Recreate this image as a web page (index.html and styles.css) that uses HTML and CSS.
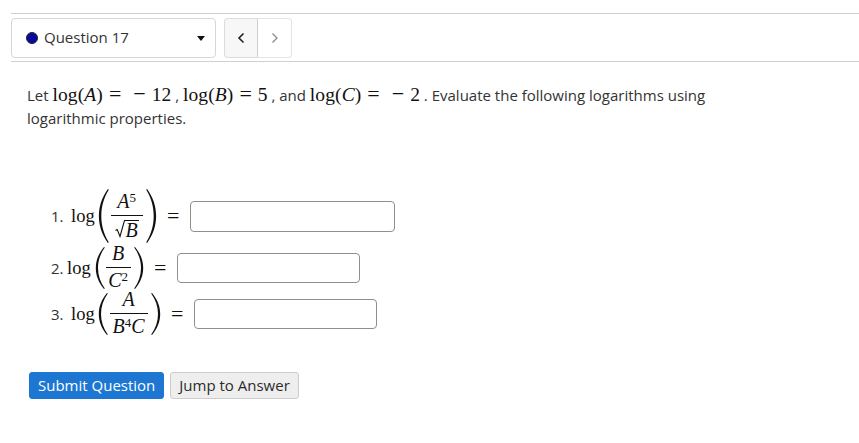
FILE: index.html
```html
<!DOCTYPE html>
<html lang="en">
<head>
<meta charset="utf-8">
<title>Question 17</title>
<link rel="stylesheet" href="styles.css">
</head>
<body>
<svg class="defs" width="0" height="0" aria-hidden="true">
  <symbol id="paren" viewBox="0 0 10 50" preserveAspectRatio="none">
    <path d="M9 0C3.500 8 .8 16 .8 25S3.500 42 9 50L9.800 49.300C5.400 42 3 34 3 25S5.400 8 9.800 .7Z" fill="#111"/>
  </symbol>
</svg>
<main class="page">
  <nav class="nav">
    <div class="select">
      <span class="dot"></span>
      <span class="select-label">Question 17</span>
      <span class="caret"></span>
    </div>
    <div class="pager">
      <button class="page-btn active" type="button"><svg width="8" height="12" viewBox="0 0 8 12"><path d="M6.500 1.500 2 6l4.500 4.500" fill="none" stroke="#222" stroke-width="1.600"/></svg></button>
      <button class="page-btn" type="button"><svg width="8" height="12" viewBox="0 0 8 12"><path d="M1.500 1.500 6 6l-4.500 4.500" fill="none" stroke="#8a8a8a" stroke-width="1.300"/></svg></button>
    </div>
  </nav>
  <section class="question">
    <p class="prompt">Let <span class="m"><span class="fn">log(<i>A</i>)</span><span class="op">=</span><span class="neg">−</span><span class="dg">12</span></span> , <span class="m"><span class="fn">log(<i>B</i>)</span><span class="op">=</span><span class="dg">5</span></span> , and <span class="m"><span class="fn">log(<i>C</i>)</span><span class="op">=</span><span class="neg">−</span><span class="dg">2</span></span> . Evaluate the following logarithms using<br>logarithmic properties.</p>
    <div class="rows">
      <div class="row row-1">
        <span class="num">1.</span><span class="m log">log</span>
        <svg class="paren paren-tall"><use href="#paren"/></svg>
        <span class="frac frac-1"><span class="top"><i>A</i><sup>5</sup></span><span class="bot bot-root"><svg class="radical" width="10" height="18" viewBox="0 0 10 18"><path d="M.5 10.500 2.200 9.500 5 16.500 9.500 .5H10" fill="none" stroke="#111" stroke-width="1.100"/></svg><i class="over">B</i></span></span>
        <svg class="paren paren-tall flip"><use href="#paren"/></svg>
        <span class="m eq">=</span>
        <input class="answer answer-1" type="text" aria-label="Answer 1">
      </div>
      <div class="row row-2">
        <span class="num">2.</span><span class="m log">log</span>
        <svg class="paren"><use href="#paren"/></svg>
        <span class="frac frac-2"><span class="top"><i>B</i></span><span class="bot"><i>C</i><sup>2</sup></span></span>
        <svg class="paren flip"><use href="#paren"/></svg>
        <span class="m eq">=</span>
        <input class="answer answer-2" type="text" aria-label="Answer 2">
      </div>
      <div class="row row-3">
        <span class="num">3.</span><span class="m log">log</span>
        <svg class="paren"><use href="#paren"/></svg>
        <span class="frac frac-3"><span class="top"><i>A</i></span><span class="bot"><i>B</i><sup>4</sup><i>C</i></span></span>
        <svg class="paren flip"><use href="#paren"/></svg>
        <span class="m eq">=</span>
        <input class="answer answer-2" type="text" aria-label="Answer 3">
      </div>
    </div>
    <div class="actions">
      <button class="btn primary" type="button">Submit Question</button>
      <button class="btn" type="button">Jump to Answer</button>
    </div>
  </section>
</main>
</body>
</html>
```
FILE: styles.css
```css
* { box-sizing: border-box; }
html, body { margin: 0; padding: 0; }
body {
  background: #fff;
  color: #2b2b2b;
  font-family: "Open Sans", sans-serif;
  font-size: 15px;
}
.defs { display: block; height: 0; }
.page { padding: 13px 0 0 11px; }

.nav {
  display: flex;
  gap: 8px;
  height: 49px;
  padding: 4px 0 3px;
  border-top: 1px solid #d0d0d0;
  border-bottom: 1px solid #d0d0d0;
}
.select {
  display: flex;
  align-items: center;
  width: 205px;
  padding: 0 10px 0 14px;
  border: 1px solid #d6d6d6;
  border-radius: 4px;
}
.dot {
  width: 12px;
  height: 12px;
  margin-right: 6px;
  border-radius: 50%;
  background: #0a0a9a;
  border: 1px solid #223;
}
.select-label { flex: 1; padding-bottom: 2px; font-size: 15px; color: #333; }
.caret {
  width: 0;
  height: 0;
  border-left: 4px solid transparent;
  border-right: 4px solid transparent;
  border-top: 5px solid #111;
}
.pager { display: flex; }
.page-btn {
  display: flex;
  align-items: center;
  justify-content: center;
  width: 34px;
  padding: 0;
  background: #fff;
  border: 1px solid #e4e4e4;
  border-left: 0;
  border-radius: 0 4px 4px 0;
}
.page-btn.active {
  background: #f7f7f7;
  border: 1px solid #dcdcdc;
  border-right-color: #cfcfcf;
  border-radius: 4px 0 0 4px;
}

.question { padding: 21px 0 0 16px; }
.prompt {
  margin: 0;
  font-size: 15px;
  line-height: 23px;
  color: #333;
}
.m {
  font-family: "Liberation Serif", serif;
  font-size: 19.500px;
  line-height: 1;
  color: #111;
}
.fn { letter-spacing: .1px; }
.op { margin: 0 6px; font-size: 22px; line-height: 1; }
.neg { margin: 0 6px; font-size: 22px; line-height: 1; }
.rows { margin-top: 57px; padding-left: 24px; }
.row { display: flex; align-items: center; }
.row-1 { height: 58px; }
.row-2, .row-3 { height: 46px; }
.num { width: 20px; font-size: 15px; color: #333; }
.row-2 .num { width: 16px; }
.log { margin-right: 3px; font-size: 18.500px; }
.row-2 .log { margin-right: 4px; }
.paren { display: block; width: 10px; height: 42px; flex: none; }
.paren-tall { width: 11px; height: 54px; }
.flip { transform: scaleX(-1); }
.frac {
  display: flex;
  flex-direction: column;
  align-items: center;
  font-family: "Liberation Serif", serif;
  font-size: 20px;
  color: #111;
  line-height: 20px;
}
.frac-1 { width: 32px; margin: 0 3px 0 2px; }
.frac-2 { width: 25px; margin: 0 3px 0 1px; }
.frac-3 { width: 38px; margin: 0 3px 0 2px; }
.top, .bot { display: block; height: 26px; white-space: nowrap; text-align: center; }
.top { width: 100%; padding-top: 1px; border-bottom: 1px solid #111; }
.bot { padding-top: 2px; }
.bot-root { display: flex; align-items: flex-start; padding-top: 4px; }
.radical { display: block; flex: none; }
sup { font-size: 13px; line-height: 0; vertical-align: 6px; }
.over { display: block; padding: 0 1px; border-top: 1px solid #111; line-height: 18px; }
.eq { width: 33px; font-size: 22px; text-align: center; }
.answer {
  height: 31px;
  padding: 0 6px;
  background: #fff;
  border: 1px solid #8f8f8f;
  border-radius: 4px;
}
.answer-1 { width: 205px; }
.answer-2 { width: 183px; height: 30px; }

.actions { display: flex; gap: 6px; margin-top: 35px; padding-left: 2px; }
.btn {
  height: 27px;
  padding: 0 8px 2px;
  font-family: "Open Sans", sans-serif;
  font-size: 15px;
  color: #2b2b2b;
  background: #eee;
  border: 1px solid #ccc;
  border-radius: 3px;
}
.primary { color: #fff; background: #1c76d2; border-color: #1c76d2; }
```
